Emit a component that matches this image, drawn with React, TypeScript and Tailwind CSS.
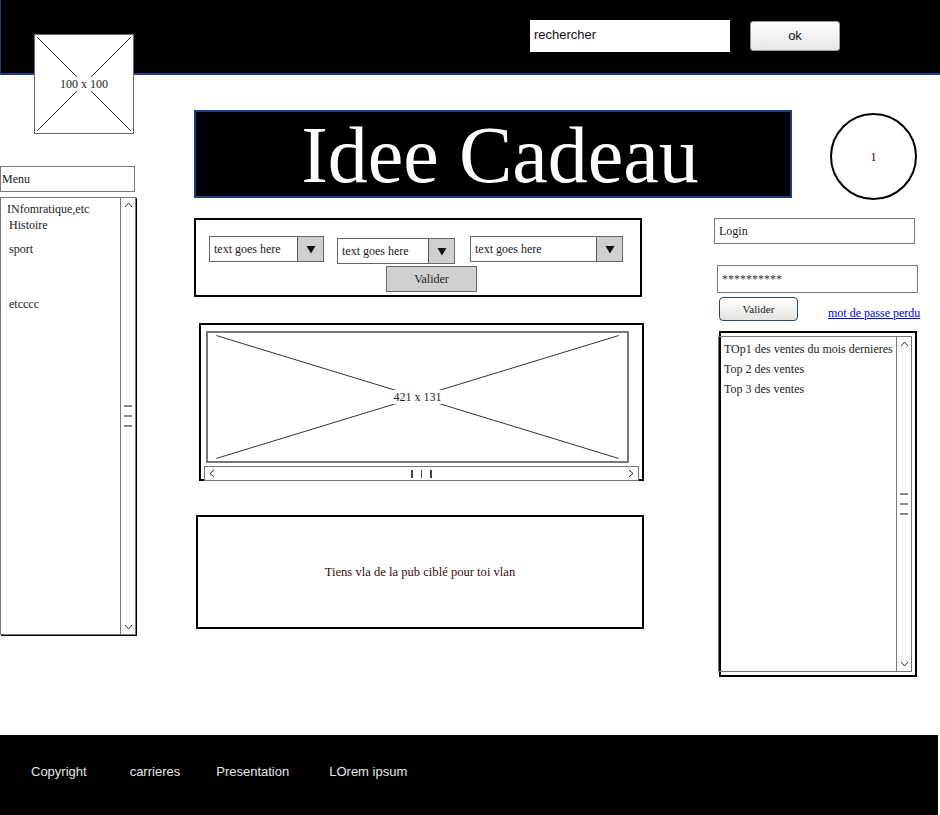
function ChevronUp() {
  return (
    <svg width="9" height="6" viewBox="0 0 9 6" className="block">
      <path d="M1 5 L4.5 1 L8 5" fill="none" stroke="#222" strokeWidth="1" />
    </svg>
  );
}

function ChevronDown() {
  return (
    <svg width="9" height="6" viewBox="0 0 9 6" className="block">
      <path d="M1 1 L4.5 5 L8 1" fill="none" stroke="#222" strokeWidth="1" />
    </svg>
  );
}

function VScroll() {
  return (
    <div className="w-[15px] h-full border-l-[1.5px] border-[#777] flex flex-col items-center justify-between py-[4px] shrink-0">
      <ChevronUp />
      <div className="flex flex-col gap-[8px]">
        <div className="w-[8px] h-[2px] bg-[#888]"></div>
        <div className="w-[8px] h-[2px] bg-[#888]"></div>
        <div className="w-[8px] h-[2px] bg-[#888]"></div>
      </div>
      <ChevronDown />
    </div>
  );
}

function Placeholder({ label, className }: { label: string; className: string }) {
  return (
    <div className={"relative bg-white flex items-center justify-center " + className}>
      <svg className="absolute inset-0 w-full h-full" preserveAspectRatio="none" viewBox="0 0 100 100">
        <line x1="2" y1="2" x2="98" y2="98" stroke="#333" strokeWidth="1" vectorEffect="non-scaling-stroke" />
        <line x1="98" y1="2" x2="2" y2="98" stroke="#333" strokeWidth="1" vectorEffect="non-scaling-stroke" />
      </svg>
      <span className="relative bg-white px-[1px] text-[12px] leading-[14px] text-[#222]">{label}</span>
    </div>
  );
}

function Dropdown({ width, className }: { width: string; className: string }) {
  return (
    <div className={"h-[26px] flex border-[1.5px] border-[#666] bg-white " + width + " " + className}>
      <div className="flex-1 flex items-center pl-[4px] text-[12px] text-[#222]">text goes here</div>
      <div className="w-[26px] bg-[#d0d0d0] border-l-[1.5px] border-[#555] flex items-center justify-center">
        <svg width="10" height="9" viewBox="0 0 10 9">
          <path d="M0.5 1 L9.5 1 L5 8.5 Z" fill="#111" />
        </svg>
      </div>
    </div>
  );
}

export default function App() {
  return (
    <div className="relative w-[940px] h-[815px] overflow-hidden bg-white font-['Liberation_Serif',serif]">
      {/* Header */}
      <header className="h-[75px] bg-black border-l-[1.5px] border-b-2 border-[#1f3a87] flex items-start pl-[529px] pt-[20px] gap-[20px] font-['Liberation_Sans',Arial,sans-serif]">
        <div className="w-[200px] h-[32px] bg-white flex items-center pl-[4px] pb-[3px] text-[13px] text-[#111]">rechercher</div>
        <button className="mt-[1px] w-[90px] h-[30px] rounded-[3px] border border-[#a09a90] bg-gradient-to-b from-white to-[#e6e6e6] text-[13px] text-[#111]">ok</button>
      </header>

      {/* Logo placeholder overlapping header */}
      <div className="absolute left-[34px] top-[34px]">
        <Placeholder label="100 x 100" className="w-[100px] h-[100px] border-[1.5px] border-[#666]" />
      </div>

      {/* Main */}
      <div className="h-[660px] flex">
        {/* Left column */}
        <aside className="w-[137px] pt-[91px] shrink-0">
          <div className="w-[135px] h-[26px] border-[1.5px] border-[#777] flex items-center pl-[1px] text-[12px] text-[#222]">Menu</div>
          <div className="mt-[5px] w-[136px] h-[438px] border-[1.5px] border-[#777] shadow-[1px_1px_0_#000] flex">
            <div className="flex-1 pt-[3px] text-[12px] text-[#222] leading-[16px]">
              <div className="pl-[6px]">INfomratique,etc</div>
              <div className="pl-[8px]">Histoire</div>
              <div className="pl-[8px] mt-[8px]">sport</div>
              <div className="pl-[8px] mt-[39px]">etcccc</div>
            </div>
            <VScroll />
          </div>
        </aside>

        {/* Center + right */}
        <div className="flex-1 pl-[57px] pt-[35px]">
          <div className="flex items-start">
            <div className="w-[598px] h-[88px] bg-black border-2 border-[#1f3a87] flex items-center justify-center">
              <span className="text-[80px] leading-none text-white pt-[2px] pl-[14px]">Idee Cadeau</span>
            </div>
            <div className="ml-[38px] mt-[3px] w-[87px] h-[87px] rounded-full border-2 border-black flex items-center justify-center text-[12px] text-[#300]">1</div>
          </div>

          <div className="flex mt-[18px]">
            {/* Center column */}
            <div className="w-[450px] shrink-0">
              <div className="w-[448px] h-[79px] border-2 border-black pt-[16px] pl-[13px]">
                <div className="flex items-start">
                  <Dropdown width="w-[115px]" className="" />
                  <Dropdown width="w-[118px]" className="ml-[13px] mt-[2px]" />
                  <Dropdown width="w-[153px]" className="ml-[15px]" />
                </div>
                <button className="ml-[177px] mt-[2px] w-[91px] h-[26px] bg-[#d0d0d0] border-[1.5px] border-[#666] text-[12px] text-[#222]">Valider</button>
              </div>

              <div className="ml-[5px] mt-[26px] w-[445px] h-[158px] border-2 border-black pt-[6px] pl-[5px]">
                <Placeholder label="421 x 131" className="w-[423px] h-[132px] border-2 border-[#777]" />
                <div className="-ml-[2px] mt-[3px] w-[435px] h-[15px] border-[1.5px] border-[#777] bg-white flex items-center justify-between px-[4px]">
                  <svg width="6" height="9" viewBox="0 0 6 9"><path d="M5 1 L1 4.5 L5 8" fill="none" stroke="#222" strokeWidth="1" /></svg>
                  <div className="flex gap-[8px]">
                    <div className="w-[1.5px] h-[8px] bg-[#444]"></div>
                    <div className="w-[1.5px] h-[8px] bg-[#444]"></div>
                    <div className="w-[1.5px] h-[8px] bg-[#444]"></div>
                  </div>
                  <svg width="6" height="9" viewBox="0 0 6 9"><path d="M1 1 L5 4.5 L1 8" fill="none" stroke="#222" strokeWidth="1" /></svg>
                </div>
              </div>

              <div className="ml-[2px] mt-[34px] w-[448px] h-[114px] border-2 border-black flex items-center justify-center text-[12.6px] text-[#3a0a0a]">
                Tiens vla de la pub ciblé pour toi vlan
              </div>
            </div>

            {/* Right column */}
            <div className="ml-[70px] w-[210px]">
              <div className="w-[201px] h-[26px] border-[1.5px] border-[#777] flex items-center pl-[4px] text-[12px] text-[#222]">Login</div>
              <div className="ml-[3px] mt-[21px] w-[201px] h-[28px] border-[1.5px] border-[#777] flex items-center pl-[4px] text-[12px] text-[#333]">**********</div>
              <div className="flex items-end mt-[4px]">
                <button className="ml-[5px] w-[79px] h-[24px] rounded-[4px] border border-[#2c4a6e] bg-gradient-to-b from-white to-[#e4e4dc] text-[11px] text-[#222]">Valider</button>
                <a className="ml-[30px] -mb-[1px] text-[12px] text-[#0000ee] underline">mot de passe perdu</a>
              </div>
              <div className="ml-[5px] mt-[10px] w-[198px] h-[346px] border-2 border-black pt-[3px] pr-[3px] pb-[3px]">
                <div className="-ml-[3px] w-[194px] h-full border-[1.5px] border-[#777] flex">
                  <div className="flex-1 pl-[5px] pt-[2px] text-[12px] leading-[20px] text-[#222]">
                    <div className="whitespace-nowrap">TOp1 des ventes du mois dernieres</div>
                    <div>Top 2 des ventes</div>
                    <div>Top 3 des ventes</div>
                  </div>
                  <VScroll />
                </div>
              </div>
            </div>
          </div>
        </div>
      </div>

      {/* Footer */}
      <footer className="w-[938px] h-[80px] bg-black flex items-center pb-[6px] font-['Liberation_Sans',Arial,sans-serif] text-[13px] text-[#e6e6e6]">
        <span className="ml-[31px]">Copyright</span>
        <span className="ml-[43px]">carrieres</span>
        <span className="ml-[36px]">Presentation</span>
        <span className="ml-[40px]">LOrem ipsum</span>
      </footer>
    </div>
  );
}
